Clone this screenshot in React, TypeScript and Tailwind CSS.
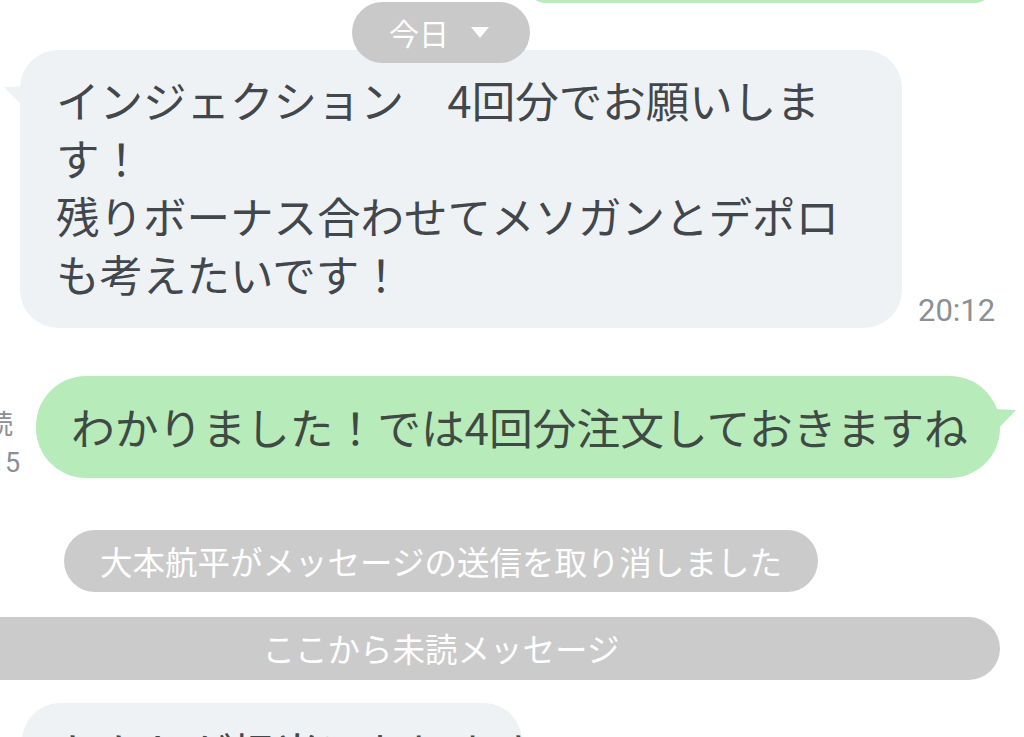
import React from "react";

const jp = { fontFamily: '"Noto Sans CJK JP", "Noto Sans", sans-serif' };

function LeftTail() {
  return (
    <svg className="absolute left-[-16px] top-[36px]" width="24" height="26" viewBox="0 0 24 26">
      <path d="M0 1 L24 0 L24 26 Z" fill="#eff2f5" />
    </svg>
  );
}

function RightTail() {
  return (
    <svg className="absolute right-[-16px] top-[33px]" width="24" height="26" viewBox="0 0 24 26">
      <path d="M24 1 L0 0 L0 26 Z" fill="#b8ebba" />
    </svg>
  );
}

export default function App() {
  return (
    <div className="relative w-[1024px] h-[737px] overflow-hidden bg-white" style={jp}>
      {/* floating date header */}
      <div className="absolute left-[352px] top-[2px] w-[178px] h-[61px] rounded-full bg-[#c6c6c6]/95 flex items-center justify-center gap-[22px] text-white text-[30px] z-10">
        <span className="-ml-[4px]">今日</span>
        <svg width="18" height="12" viewBox="0 0 18 12">
          <path d="M0 0 L18 0 L9 11 Z" fill="#ffffff" />
        </svg>
      </div>

      <div className="flex flex-col">
        {/* previous outgoing message, mostly scrolled away */}
        <div className="ml-[526px] mt-[-37px] w-[468px] h-[40px] rounded-[36px] bg-[#b8ebba]" />

        {/* incoming message */}
        <div className="flex items-end gap-[16px] mt-[47px] ml-[20px]">
          <div className="relative w-[882px] rounded-[38px] bg-[#eff2f5] pl-[36px] pt-[21px] pb-[25px] text-[43.5px] leading-[58px] text-[#41474c]">
            <LeftTail />
            <div className="whitespace-nowrap">インジェクション　4回分でお願いしま</div>
            <div className="whitespace-nowrap">す！</div>
            <div className="whitespace-nowrap">残りボーナス合わせてメソガンとデポロ</div>
            <div className="whitespace-nowrap">も考えたいです！</div>
          </div>
          <div className="text-[31px] leading-[34px] text-[#8a9096]" style={{ fontFamily: "Roboto, sans-serif" }}>
            20:12
          </div>
        </div>

        {/* outgoing message */}
        <div className="flex items-end mt-[48px] ml-[-47px] gap-[23px]">
          <div className="w-[60px] mb-[-5px] text-right text-[27px] leading-[40px] text-[#8a9096]">
            <div>既読</div>
            <div style={{ fontFamily: "Roboto, sans-serif" }}>20:15</div>
          </div>
          <div className="relative w-[964px] h-[102px] rounded-[50px] bg-[#b8ebba] pl-[35px] flex items-center text-[43.75px] text-[#3e4a43] whitespace-nowrap">
            <RightTail />
            わかりました！では4回分注文しておきますね
          </div>
        </div>

        {/* system notice */}
        <div className="mt-[52px] ml-[64px] w-[754px] h-[62px] rounded-full bg-[#cbcbcb] flex items-center justify-center text-white text-[32.5px] whitespace-nowrap">
          大本航平がメッセージの送信を取り消しました
        </div>

        {/* unread divider */}
        <div className="mt-[25px] ml-[-118px] w-[1118px] h-[63px] rounded-full bg-[#cbcbcb] flex items-center justify-center text-white text-[32.5px] whitespace-nowrap">
          ここから未読メッセージ
        </div>

        {/* next incoming message, cut off */}
        <div className="mt-[23px] ml-[22px] w-[500px] h-[100px] rounded-[38px] bg-[#eff2f5] pl-[36px] pt-[20px] text-[43.5px] leading-[58px] text-[#41474c] whitespace-nowrap">
          わたしが担当になります
        </div>
      </div>
    </div>
  );
}
